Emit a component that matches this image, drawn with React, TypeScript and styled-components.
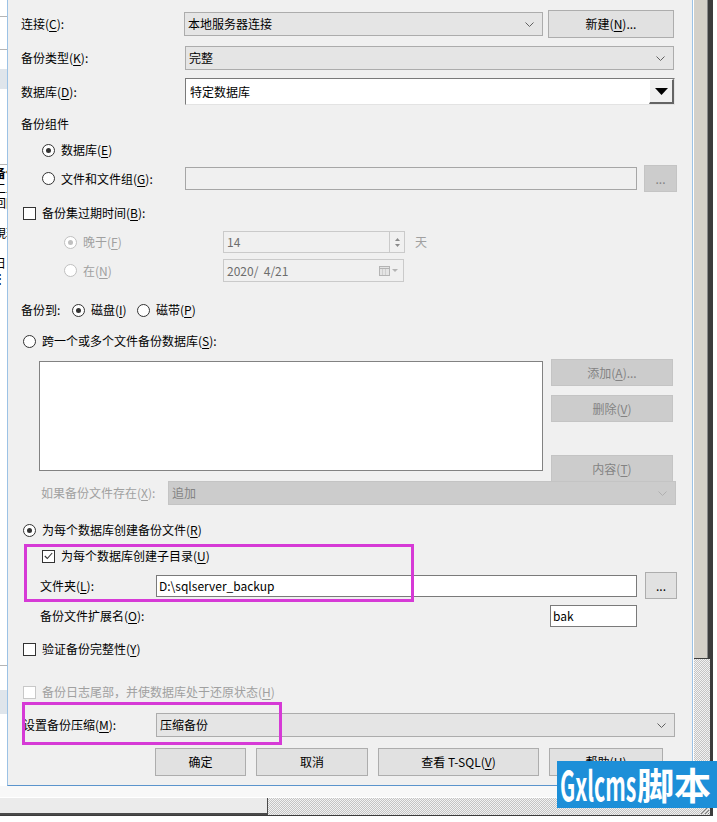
import React from 'react';
import styled, { createGlobalStyle } from 'styled-components';

const GlobalStyle = createGlobalStyle`
  html, body { margin: 0; padding: 0; background: #fff; }
  body {
    font-family: "Noto Sans CJK SC", "Noto Sans", sans-serif;
    font-size: 12px;
    line-height: 16px;
    color: #000;
  }
`;

const hatch = `repeating-conic-gradient(#c4c4c4 0 25%, #f2f2f2 0 50%) 0 0 / 2px 2px`;

const Screen = styled.div`
  position: relative;
  width: 717px;
  height: 822px;
  overflow: hidden;
  background: #fff;
`;

const Window = styled.div`
  display: grid;
  grid-template-columns: 693px 17px;
  grid-template-rows: 797px 18px;
  width: fit-content;
  border-right: 3px solid #3c3c3c;
  border-bottom: 1px solid #3c3c3c;
`;

const MainArea = styled.div`
  display: flex;
  flex-direction: column;
`;

const TopRow = styled.div`
  display: flex;
  height: 786px;
`;

const Gap = styled.div`
  flex: 1;
  background: #f8f8f8;
`;

/* window behind the dialog, only a sliver is visible */
const BehindStrip = styled.div`
  width: 7px;
  flex: none;
  overflow: hidden;
  background: #fff;
  display: flex;
  flex-direction: column;
`;

const BehindLine = styled.div<{ $mt: number }>`
  height: 1px;
  margin-top: ${p => p.$mt}px;
  background: #b5b5b5;
`;

const BehindBlock = styled.div<{ $mt: number; $h: number }>`
  height: ${p => p.$h}px;
  margin-top: ${p => p.$mt}px;
  background: #dfe5eb;
`;

const BehindText = styled.div<{ $bold?: boolean }>`
  margin-left: -6px;
  height: 15px;
  line-height: 15px;
  font-size: 12px;
  font-weight: ${p => (p.$bold ? 700 : 400)};
  white-space: nowrap;
`;

const Dialog = styled.div`
  flex: 1;
  box-sizing: border-box;
  background: #f0f0f0;
  border-left: 1px solid #9cc2e5;
  border-right: 1px solid #9cc2e5;
  border-bottom: 1px solid #5b94cc;
  display: flex;
  flex-direction: column;
`;

const VScroll = styled.div`
  border-left: 1px solid #fff;
  background: ${hatch};
  display: flex;
  flex-direction: column;
`;

const VThumb = styled.div`
  height: 658px;
  background: #d4d0c8;
  border-right: 2px solid #3c3c3c;
  border-bottom: 1px solid #3c3c3c;
  box-shadow: inset -1px 0 0 #8a8a8a;
`;

const HScroll = styled.div`
  background: ${hatch};
  border-top: 1px solid #fff;
  display: flex;
`;

const HThumb = styled.div`
  width: 268px;
  background: #ebebeb;
  border-right: 1px solid #4a4a4a;
  border-bottom: 2px solid #4a4a4a;
  box-sizing: border-box;
`;

const Grip = styled.div`
  background: ${hatch};
  display: flex;
  align-items: flex-end;
  justify-content: flex-end;
`;

const Row = styled.div<{ $h: number; $mt: number; $pl?: number; $top?: boolean }>`
  display: flex;
  align-items: ${p => (p.$top ? 'flex-start' : 'center')};
  height: ${p => p.$h}px;
  margin-top: ${p => p.$mt}px;
  padding-left: ${p => p.$pl ?? 13}px;
  flex: none;
`;

const Label = styled.span<{ $w?: number; $disabled?: boolean; $ml?: number }>`
  flex: none;
  white-space: nowrap;
  width: ${p => (p.$w ? `${p.$w}px` : 'auto')};
  margin-left: ${p => p.$ml ?? 0}px;
  color: ${p => (p.$disabled ? '#a0a0a0' : '#000')};
`;

const Acc = styled.span`
  text-decoration: underline;
  text-underline-offset: 2px;
`;

const Combo = styled.div<{ $w: number; $disabled?: boolean }>`
  width: ${p => p.$w}px;
  height: 24px;
  box-sizing: border-box;
  flex: none;
  display: flex;
  align-items: center;
  justify-content: space-between;
  padding: 0 8px 0 3px;
  border: 1px solid ${p => (p.$disabled ? '#c4c4c4' : '#acacac')};
  background: ${p => (p.$disabled ? '#cccccc' : '#e5e5e5')};
  color: ${p => (p.$disabled ? '#838383' : '#000')};
  white-space: nowrap;
`;

const Button = styled.div<{ $w: number; $h?: number; $disabled?: boolean; $ml?: number }>`
  width: ${p => p.$w}px;
  height: ${p => p.$h ?? 27}px;
  margin-left: ${p => p.$ml ?? 0}px;
  box-sizing: border-box;
  flex: none;
  display: flex;
  align-items: center;
  justify-content: center;
  border: 1px solid ${p => (p.$disabled ? '#c4c4c4' : '#adadad')};
  background: ${p => (p.$disabled ? '#cccccc' : '#e1e1e1')};
  color: ${p => (p.$disabled ? '#838383' : '#000')};
  white-space: nowrap;
`;

const DbBox = styled.div`
  width: 490px;
  height: 27px;
  box-sizing: border-box;
  flex: none;
  display: flex;
  align-items: center;
  justify-content: space-between;
  background: #fff;
  border-top: 1px solid #7a7a7a;
  border-left: 1px solid #7a7a7a;
  border-bottom: 1px solid #e3e3e3;
  border-right: 1px solid #e3e3e3;
  padding-left: 4px;
`;

const DropButton = styled.div`
  width: 25px;
  height: 25px;
  box-sizing: border-box;
  display: flex;
  align-items: center;
  justify-content: center;
  background: #f0f0f0;
  border-top: 1px solid #fff;
  border-left: 1px solid #fff;
  border-right: 2px solid #646464;
  border-bottom: 2px solid #646464;
`;

const TextBox = styled.div<{ $w: number; $h?: number; $disabled?: boolean }>`
  width: ${p => p.$w}px;
  height: ${p => p.$h ?? 23}px;
  box-sizing: border-box;
  flex: none;
  display: flex;
  align-items: center;
  padding-left: 2px;
  background: ${p => (p.$disabled ? '#f0f0f0' : '#fff')};
  border: 1px solid ${p => (p.$disabled ? '#a6a6a6' : '#7a7a7a')};
  white-space: pre;
`;

const FieldBox = styled.div<{ $w: number; $h: number }>`
  width: ${p => p.$w}px;
  height: ${p => p.$h}px;
  box-sizing: border-box;
  flex: none;
  display: flex;
  align-items: center;
  justify-content: space-between;
  padding-left: 3px;
  background: #f0f0f0;
  border: 1px solid #cacaca;
  color: #6d6d6d;
  white-space: pre;
`;

const Spin = styled.div`
  width: 14px;
  height: 100%;
  border-left: 1px solid #cacaca;
  display: flex;
  flex-direction: column;
  align-items: center;
  justify-content: center;
  gap: 3px;
`;

const DateTail = styled.div`
  display: flex;
  align-items: center;
  gap: 2px;
  padding-right: 5px;
`;

const Option = styled.label<{ $w?: number; $disabled?: boolean }>`
  display: flex;
  align-items: center;
  gap: 6px;
  flex: none;
  width: ${p => (p.$w ? `${p.$w}px` : 'auto')};
  white-space: nowrap;
  color: ${p => (p.$disabled ? '#a0a0a0' : '#000')};
`;

const RadioCircle = styled.span<{ $checked?: boolean; $disabled?: boolean }>`
  width: 13px;
  height: 13px;
  box-sizing: border-box;
  border-radius: 50%;
  border: 1px solid ${p => (p.$disabled ? '#c0c0c0' : '#333')};
  background: #fff;
  display: inline-flex;
  align-items: center;
  justify-content: center;
  flex: none;
  &::after {
    content: '';
    width: 5px;
    height: 5px;
    border-radius: 50%;
    background: ${p => (p.$disabled ? '#c0c0c0' : '#333')};
    display: ${p => (p.$checked ? 'block' : 'none')};
  }
`;

const CheckSquare = styled.span<{ $disabled?: boolean }>`
  width: 13px;
  height: 13px;
  box-sizing: border-box;
  border: 1px solid ${p => (p.$disabled ? '#c8c8c8' : '#333')};
  background: #fff;
  display: inline-flex;
  align-items: center;
  justify-content: center;
  flex: none;
`;

const ListBox = styled.div`
  width: 504px;
  height: 110px;
  margin-top: 2px;
  margin-left: 18px;
  box-sizing: border-box;
  flex: none;
  background: #fff;
  border: 1px solid #828282;
`;

const ButtonStack = styled.div`
  display: flex;
  flex-direction: column;
  margin-left: 8px;
  gap: 9px;
`;

const StackSpacer = styled.div`
  height: 15px;
`;

const Highlight = styled.div<{ $x: number; $y: number; $w: number; $h: number }>`
  position: absolute;
  left: ${p => p.$x}px;
  top: ${p => p.$y}px;
  width: ${p => p.$w}px;
  height: ${p => p.$h}px;
  box-sizing: border-box;
  border: 3px solid #d63ad6;
  pointer-events: none;
`;

const Watermark = styled.div`
  position: absolute;
  left: 557px;
  top: 761px;
  width: 170px;
  height: 47px;
  padding-left: 3px;
  box-sizing: border-box;
  background: #1d8fd8;
  color: #fff;
  display: flex;
  align-items: center;
  font-family: "Noto Sans CJK SC", sans-serif;
  font-weight: 700;
  font-size: 37px;
  line-height: 47px;
  white-space: nowrap;
`;

const WmLatin = styled.span`
  display: inline-block;
  width: 77px;
  flex: none;
  & > span {
    display: inline-block;
    transform: scaleX(0.52);
    transform-origin: left center;
    font-size: 41px;
  }
`;

const WmCjk = styled.span`
  flex: none;
`;

const Chevron = ({ color = '#606060' }: { color?: string }) => (
  <svg width="9" height="5" viewBox="0 0 9 5">
    <polyline points="0.5,0.5 4.5,4.5 8.5,0.5" fill="none" stroke={color} strokeWidth="1" />
  </svg>
);

const Radio = ({ checked, disabled, w, children }: { checked?: boolean; disabled?: boolean; w?: number; children: React.ReactNode }) => (
  <Option $w={w} $disabled={disabled}>
    <RadioCircle $checked={checked} $disabled={disabled} />
    <span>{children}</span>
  </Option>
);

const Check = ({ checked, disabled, children }: { checked?: boolean; disabled?: boolean; children: React.ReactNode }) => (
  <Option $disabled={disabled}>
    <CheckSquare $disabled={disabled}>
      {checked && (
        <svg width="9" height="8" viewBox="0 0 9 8">
          <polyline points="0.8,4 3.3,6.5 8.2,1" fill="none" stroke="#333" strokeWidth="1.1" />
        </svg>
      )}
    </CheckSquare>
    <span>{children}</span>
  </Option>
);

const App: React.FC = () => (
  <Screen>
    <GlobalStyle />
    <Window>
      <MainArea>
        <TopRow>
          <BehindStrip>
            <BehindLine $mt={16} />
            <BehindLine $mt={32} />
            <BehindBlock $mt={19} $h={20} />
            <BehindLine $mt={75} />
            <BehindText $bold>备份</BehindText>
            <BehindText>二二</BehindText>
            <BehindText>回回</BehindText>
            <BehindText>：</BehindText>
            <BehindText>現現</BehindText>
            <BehindText>：</BehindText>
            <BehindText>日日</BehindText>
            <BehindText>⋮⋮</BehindText>
            <BehindLine $mt={380} />
            <BehindBlock $mt={24} $h={24} />
          </BehindStrip>

          <Dialog>
            <Row $h={28} $mt={10}>
              <Label $w={163}>连接(<Acc>C</Acc>):</Label>
              <Combo $w={359}>本地服务器连接<Chevron /></Combo>
              <Button $w={126} $h={28} $ml={5}>新建(<Acc>N</Acc>)...</Button>
            </Row>

            <Row $h={24} $mt={8}>
              <Label $w={164}>备份类型(<Acc>K</Acc>):</Label>
              <Combo $w={489}>完整<Chevron /></Combo>
            </Row>

            <Row $h={27} $mt={8}>
              <Label $w={164}>数据库(<Acc>D</Acc>):</Label>
              <DbBox>
                特定数据库
                <DropButton>
                  <svg width="13" height="7" viewBox="0 0 13 7">
                    <polygon points="0,0 13,0 6.5,7" fill="#000" />
                  </svg>
                </DropButton>
              </DbBox>
            </Row>

            <Row $h={18} $mt={10}>
              <Label>备份组件</Label>
            </Row>

            <Row $h={18} $mt={8} $pl={34}>
              <Radio checked>数据库(<Acc>E</Acc>)</Radio>
            </Row>

            <Row $h={27} $mt={6} $pl={34}>
              <Radio w={143}>文件和文件组(<Acc>G</Acc>):</Radio>
              <TextBox $w={452} $disabled />
              <Button $w={33} $disabled $ml={7}>...</Button>
            </Row>

            <Row $h={18} $mt={12} $pl={15}>
              <Check>备份集过期时间(<Acc>B</Acc>):</Check>
            </Row>

            <Row $h={22} $mt={9} $pl={56}>
              <Radio checked disabled w={159}>晚于(<Acc>F</Acc>)</Radio>
              <FieldBox $w={182} $h={22}>
                14
                <Spin>
                  <svg width="5" height="3" viewBox="0 0 5 3"><polygon points="0,3 5,3 2.5,0" fill="#8a8a8a" /></svg>
                  <svg width="5" height="3" viewBox="0 0 5 3"><polygon points="0,0 5,0 2.5,3" fill="#8a8a8a" /></svg>
                </Spin>
              </FieldBox>
              <Label $disabled $ml={10}>天</Label>
            </Row>

            <Row $h={23} $mt={6} $pl={56}>
              <Radio disabled w={159}>在(<Acc>N</Acc>)</Radio>
              <FieldBox $w={181} $h={23}>
                {'2020/  4/21'}
                <DateTail>
                  <svg width="11" height="11" viewBox="0 0 11 11">
                    <rect x="0.5" y="1.5" width="10" height="9" fill="#e4e4e4" stroke="#b4b4b4" />
                    <line x1="0.5" y1="3.5" x2="10.5" y2="3.5" stroke="#b4b4b4" />
                    <line x1="3.5" y1="4" x2="3.5" y2="10" stroke="#cfcfcf" />
                    <line x1="6.5" y1="4" x2="6.5" y2="10" stroke="#cfcfcf" />
                  </svg>
                  <svg width="6" height="3" viewBox="0 0 6 3"><polygon points="0,0 6,0 3,3" fill="#b4b4b4" /></svg>
                </DateTail>
              </FieldBox>
            </Row>

            <Row $h={20} $mt={18}>
              <Label $w={51}>备份到:</Label>
              <Radio checked w={65}>磁盘(<Acc>I</Acc>)</Radio>
              <Radio>磁带(<Acc>P</Acc>)</Radio>
            </Row>

            <Row $h={18} $mt={12} $pl={15}>
              <Radio>跨一个或多个文件备份数据库(<Acc>S</Acc>):</Radio>
            </Row>

            <Row $h={116} $mt={9} $top>
              <ListBox />
              <ButtonStack>
                <Button $w={122} $disabled>添加(<Acc>A</Acc>)...</Button>
                <Button $w={122} $disabled>删除(<Acc>V</Acc>)</Button>
                <StackSpacer />
                <Button $w={122} $h={28} $disabled>内容(<Acc>T</Acc>)</Button>
              </ButtonStack>
            </Row>

            <Row $h={24} $mt={6} $pl={33}>
              <Label $w={127} $disabled>如果备份文件存在(<Acc>X</Acc>):</Label>
              <Combo $w={508} $disabled>追加<Chevron color="#b0b0b0" /></Combo>
            </Row>

            <Row $h={18} $mt={16} $pl={15}>
              <Radio checked>为每个数据库创建备份文件(<Acc>R</Acc>)</Radio>
            </Row>

            <Row $h={18} $mt={8} $pl={34}>
              <Check checked>为每个数据库创建子目录(<Acc>U</Acc>)</Check>
            </Row>

            <Row $h={27} $mt={7} $pl={32}>
              <Label $w={116}>文件夹(<Acc>L</Acc>):</Label>
              <TextBox $w={481} $h={22}>{'D:\\sqlserver_backup'}</TextBox>
              <Button $w={32} $ml={8}>...</Button>
            </Row>

            <Row $h={22} $mt={6} $pl={32}>
              <Label $w={510}>备份文件扩展名(<Acc>O</Acc>):</Label>
              <TextBox $w={87} $h={22}>bak</TextBox>
            </Row>

            <Row $h={18} $mt={13} $pl={15}>
              <Check>验证备份完整性(<Acc>Y</Acc>)</Check>
            </Row>

            <Row $h={18} $mt={25} $pl={15}>
              <Check disabled>备份日志尾部，并使数据库处于还原状态(<Acc>H</Acc>)</Check>
            </Row>

            <Row $h={24} $mt={12} $pl={15}>
              <Label $w={133}>设置备份压缩(<Acc>M</Acc>):</Label>
              <Combo $w={519}>压缩备份<Chevron /></Combo>
            </Row>

            <Row $h={28} $mt={11} $pl={147}>
              <Button $w={91} $h={28}>确定</Button>
              <Button $w={112} $h={28} $ml={10}>取消</Button>
              <Button $w={161} $h={28} $ml={10}>查看 T-SQL(<Acc>V</Acc>)</Button>
              <Button $w={114} $h={28} $ml={10}>帮助(<Acc>H</Acc>)</Button>
            </Row>
          </Dialog>
        </TopRow>
        <Gap />
      </MainArea>

      <VScroll>
        <VThumb />
      </VScroll>

      <HScroll>
        <HThumb />
      </HScroll>

      <Grip>
        <svg width="12" height="12" viewBox="0 0 12 12">
          <line x1="11" y1="3" x2="3" y2="11" stroke="#808080" />
          <line x1="11" y1="7" x2="7" y2="11" stroke="#808080" />
          <line x1="11" y1="10" x2="10" y2="11" stroke="#808080" />
        </svg>
      </Grip>
    </Window>

    <Highlight $x={24} $y={544} $w={390} $h={58} />
    <Highlight $x={22} $y={702} $w={260} $h={43} />

    <Watermark>
      <WmLatin><span>Gxlcms</span></WmLatin>
      <WmCjk>脚本</WmCjk>
    </Watermark>
  </Screen>
);

export default App;
